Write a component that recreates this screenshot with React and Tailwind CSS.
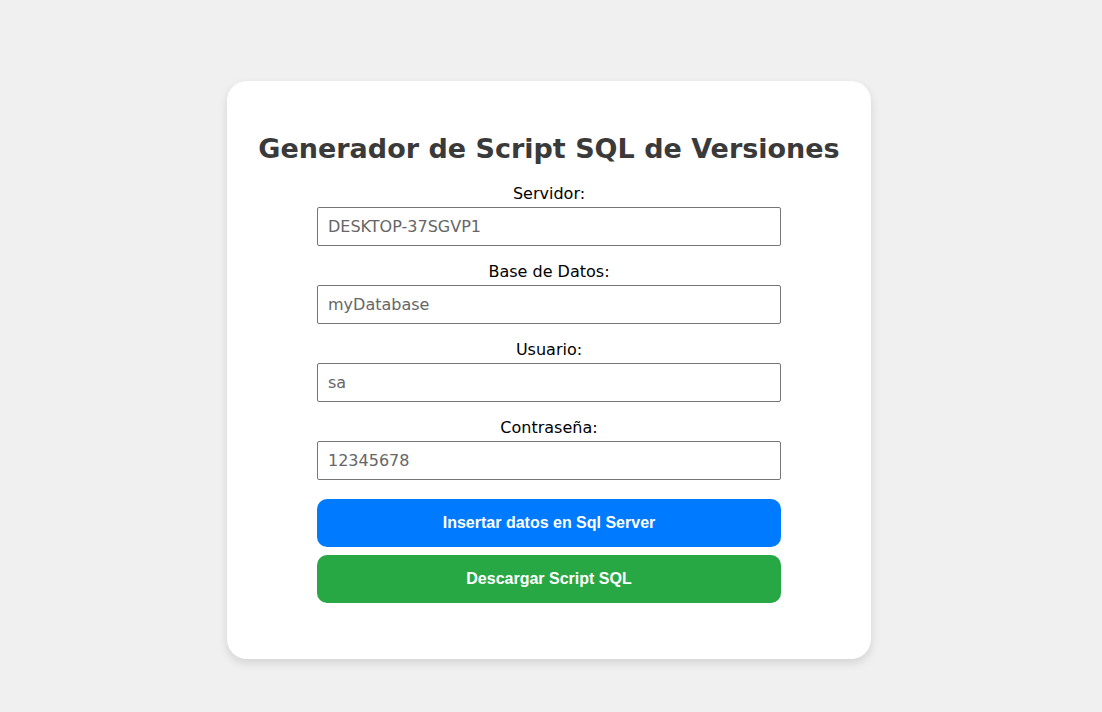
export default function App() {
  const fields = [
    { label: 'Servidor:', value: 'DESKTOP-37SGVP1' },
    { label: 'Base de Datos:', value: 'myDatabase' },
    { label: 'Usuario:', value: 'sa' },
    { label: 'Contraseña:', value: '12345678' },
  ];

  return (
    <div className="min-h-[712px] bg-[#f0f0f0] flex justify-center pt-[81px] pr-[4px] font-['DejaVu_Sans',Verdana,sans-serif]">
      <div className="w-[644px] h-[578px] bg-white rounded-[20px] shadow-[0_4px_10px_rgba(0,0,0,0.12)] pt-[51px]">
        {/* Title */}
        <h2 className="text-center text-[27px] leading-[33px] font-bold text-[#3a3a3a]">
          Generador de Script SQL de Versiones
        </h2>

        <form className="w-[464px] mx-auto mt-[19px]">
          {fields.map((f, i) => (
            <div key={i} className="mb-[16px]">
              <label className="block text-center text-[16px] leading-[19px] text-black mb-[4px]">
                {f.label}
              </label>
              <input
                type="text"
                defaultValue={f.value}
                className="w-full h-[39px] border border-[#767676] rounded-[2px] px-[10px] text-[16px] text-[#666] outline-none"
              />
            </div>
          ))}

          {/* Buttons */}
          <div className="flex flex-col gap-[8px] mt-[19px] font-['Liberation_Sans',Arial,sans-serif]">
            <button
              type="button"
              className="w-full h-[48px] rounded-[10px] bg-[#007bff] text-white text-[16px] font-bold"
            >
              Insertar datos en Sql Server
            </button>
            <button
              type="button"
              className="w-full h-[48px] rounded-[10px] bg-[#28a745] text-white text-[16px] font-bold"
            >
              Descargar Script SQL
            </button>
          </div>
        </form>
      </div>
    </div>
  );
}
